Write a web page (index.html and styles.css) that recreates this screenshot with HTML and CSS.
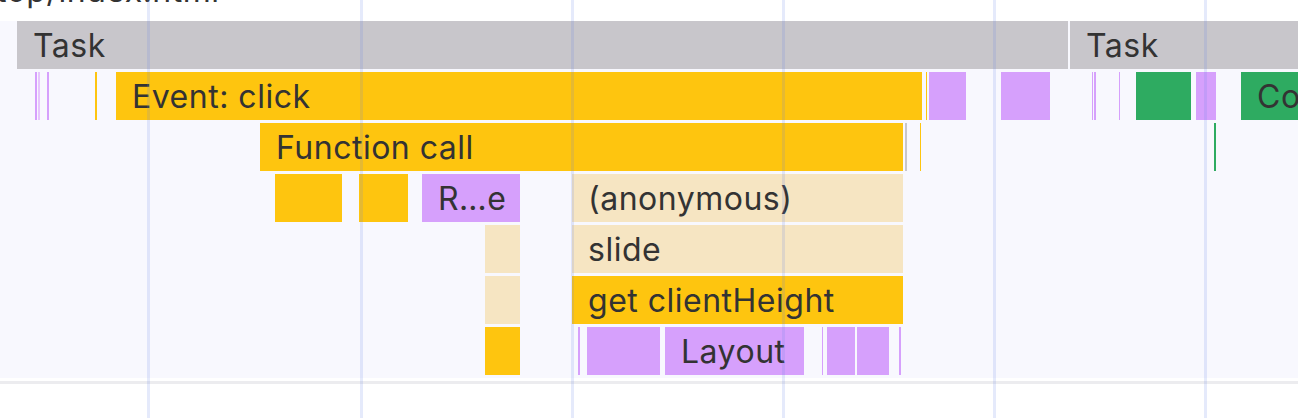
FILE: index.html
```html
<!DOCTYPE html>
<html lang="en">
<head>
  <meta charset="UTF-8" />
  <title>Performance | Flame chart</title>
  <link rel="stylesheet" href="styles.css">
</head>
<body>

<div class="panel">
  <div class="url-row"><span class="url">top/index.html</span></div>

  <div class="flame" id="flame"></div>

  <div class="divider"></div>

  <div class="grid" id="grid"></div>
</div>

<script>
  // [row, left, width, kind, label]
  const entries = [
    [0, 17, 1051, "task", "Task"],
    [0, 1070, 260, "task", "Task"],

    [1, 35, 1.6, "render"],
    [1, 38, 1.6, "render light"],
    [1, 47, 1.6, "render"],
    [1, 95, 1.5, "script"],
    [1, 116, 805.5, "script", "Event: click"],
    [1, 926, 1.4, "script"],
    [1, 929, 37, "render"],
    [1, 1001, 49, "render"],
    [1, 1091.5, 1.5, "render"],
    [1, 1094, 1.5, "render"],
    [1, 1118.7, 1.4, "render"],
    [1, 1136, 55, "paint"],
    [1, 1196, 20, "render"],
    [1, 1241, 120, "paint", "Compile Code"],

    [2, 260, 643.3, "script", "Function call"],
    [2, 905, 1.6, "task"],
    [2, 920, 1.4, "script"],
    [2, 1214, 1.5, "paint"],

    [3, 275, 67, "script"],
    [3, 359, 49, "script"],
    [3, 422, 97.5, "render", "R…e"],
    [3, 572, 331.3, "js", "(anonymous)"],

    [4, 485, 34.5, "js"],
    [4, 572, 331.3, "js", "slide"],

    [5, 485, 34.5, "js"],
    [5, 572, 331.3, "script", "get clientHeight"],

    [6, 485, 34.5, "script"],
    [6, 578, 1.6, "render"],
    [6, 587, 73, "render"],
    [6, 665, 139, "render", "Layout"],
    [6, 821.7, 1.6, "render"],
    [6, 827, 28, "render"],
    [6, 857, 31.5, "render"],
    [6, 899, 1.6, "render"]
  ];

  const flame = document.getElementById("flame");

  for (let r = 0; r < 7; r++) {
    flame.insertAdjacentHTML("beforeend", `<div class="track" id="track${r}"></div>`);
  }

  entries.forEach(([row, left, width, kind, label]) => {
    const text = label ? `<span class="label">${label}</span>` : "";
    const bar = `
      <div class="bar ${kind}" style="left:${left}px;width:${width}px">${text}</div>
    `;
    document.getElementById("track" + row).insertAdjacentHTML("beforeend", bar);
  });

  // Time grid
  const grid = document.getElementById("grid");
  [147, 360, 571, 781.5, 993, 1204].forEach(x => {
    grid.insertAdjacentHTML("beforeend", `<div class="gridline" style="left:${x}px"></div>`);
  });
</script>

</body>
</html>
```

FILE: styles.css
```css
html, body {
  margin: 0;
  padding: 0;
  background: #fff;
  overflow: hidden;
}
body {
  font-family: Inter, "Noto Sans", sans-serif;
  color: #333;
  width: 1298px;
  height: 418px;
}
.panel {
  position: relative;
  width: 1298px;
  height: 418px;
  overflow: hidden;
}
.url-row {
  height: 21px;
  overflow: hidden;
}
.url {
  display: block;
  font-size: 32px;
  letter-spacing: 0.5px;
  line-height: 38px;
  margin-top: -28px;
  margin-left: -4px;
  white-space: nowrap;
}
.flame {
  background: #f8f8fe;
  display: flex;
  flex-direction: column;
  gap: 3px;
  padding-bottom: 3px;
}
.track {
  position: relative;
  height: 48px;
}
.bar {
  position: absolute;
  top: 0;
  height: 48px;
  overflow: hidden;
}
.label {
  display: block;
  padding-left: 16px;
  font-size: 32px;
  letter-spacing: 0.5px;
  line-height: 50px;
  white-space: nowrap;
}
.task   { background: #c8c6cb; }
.script { background: #fec50f; }
.render { background: #d6a0fc; }
.render.light { background: #e6c6fd; }
.paint  { background: #2eab61; }
.js     { background: #f6e5c2; }

.divider {
  height: 3px;
  margin-top: 3px;
  background: #ececef;
}
.grid {
  position: absolute;
  inset: 0;
  pointer-events: none;
}
.gridline {
  position: absolute;
  top: 0;
  bottom: 0;
  width: 3px;
  background: rgba(100, 130, 230, 0.17);
}
```
